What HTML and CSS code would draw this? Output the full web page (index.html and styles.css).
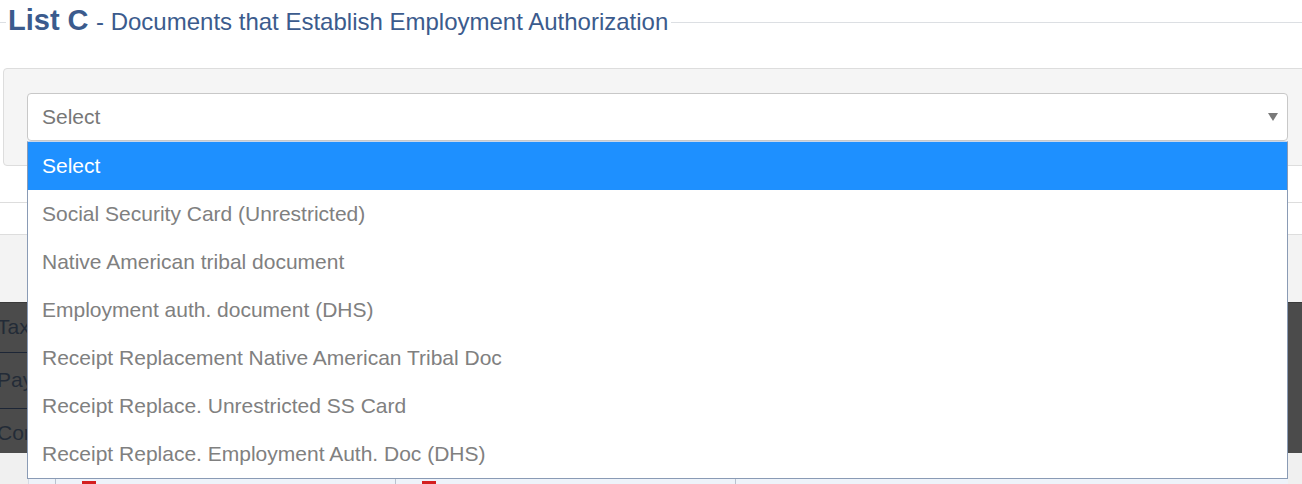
FILE: index.html
```html
<!DOCTYPE html>
<html>
<head>
	<title>I-9 Documents</title>
<link rel="stylesheet" href="styles.css">
</head>
<body>
	<fieldset class="doc-list">
		<legend><span class="list-name">List C</span> <span class="list-desc">- Documents that Establish Employment Authorization</span></legend>
		<div class="well">
			<div class="select-wrap">
				<div class="select-box">
					<span>Select</span>
					<span class="caret"></span>
				</div>
				<ul class="select-menu">
					<li class="active">Select</li>
					<li>Social Security Card (Unrestricted)</li>
					<li>Native American tribal document</li>
					<li>Employment auth. document (DHS)</li>
					<li>Receipt Replacement Native American Tribal Doc</li>
					<li>Receipt Replace. Unrestricted SS Card</li>
					<li>Receipt Replace. Employment Auth. Doc (DHS)</li>
				</ul>
			</div>
		</div>
	</fieldset>

	<div class="page-below">
		<div class="blank-row"></div>
		<div class="tab-row"></div>
		<div class="gray-row"></div>
		<div class="dark-table">
			<div class="dark-cell">Tax</div>
			<div class="dark-cell">Pay</div>
			<div class="dark-cell">Con</div>
		</div>
		<div class="foot">
			<div class="foot-table">
				<div class="foot-cell narrow"></div>
				<div class="foot-cell"><span class="flag"></span></div>
				<div class="foot-cell"><span class="flag"></span></div>
				<div class="foot-cell wide"></div>
			</div>
		</div>
	</div>
</body>
</html>
```

FILE: styles.css
```css
body {
	font-family: "Liberation Sans", Arial, sans-serif;
	margin: 0;
	padding: 0;
	background-color: #ffffff;
	overflow: hidden;
}

.doc-list {
	margin: 3px 0 0 0;
	padding: 0;
	min-width: 0;
	border: none;
	border-top: 1px solid #dcdfe3;
	position: relative;
	z-index: 2;
}

.doc-list legend {
	margin-left: 6px;
	padding: 0 3px 0 2px;
	line-height: 34px;
	color: #3b5b8d;
}

.list-name {
	font-size: 29px;
	font-weight: bold;
}

.list-desc {
	font-size: 24px;
	padding-left: 3px;
}

.well {
	margin: 26px -10px 0 3px;
	padding: 24px 23px;
	background-color: #f5f5f5;
	border: 1px solid #dddddd;
	border-radius: 4px;
}

.select-wrap {
	position: relative;
}

.select-box {
	display: flex;
	align-items: center;
	justify-content: space-between;
	box-sizing: border-box;
	height: 48px;
	padding: 0 9px 0 14px;
	font-size: 21px;
	color: #777777;
	background-color: #ffffff;
	border: 1px solid #c8c8c8;
	border-radius: 4px;
}

.caret {
	width: 0;
	height: 0;
	border-left: 5px solid transparent;
	border-right: 5px solid transparent;
	border-top: 8px solid #7a7a7a;
}

.select-menu {
	list-style: none;
	margin: 0;
	padding: 0;
	position: absolute;
	top: 48px;
	left: 0;
	right: 0;
	background-color: #ffffff;
	border: 1px solid #8a9bb5;
	border-top: 1px solid #c8d6ea;
}

.select-menu li {
	height: 48px;
	line-height: 48px;
	padding-left: 14px;
	font-size: 21px;
	color: #808080;
}

.select-menu li.active {
	background-color: #1e90ff;
	color: #ffffff;
}

.blank-row {
	height: 36px;
}

.tab-row {
	height: 31px;
	border-top: 1px solid #dddddd;
	border-bottom: 1px solid #dddddd;
}

.gray-row {
	height: 67px;
	background-color: #f3f3f3;
}

.dark-table {
	display: flex;
	flex-direction: column;
	background-color: #4b4b4b;
	border-top: 1px solid #3a3a3a;
}

.dark-cell {
	width: 40px;
	height: 50px;
	margin-left: -3px;
	padding-top: 12px;
	box-sizing: border-box;
	font-size: 21px;
	color: #232b37;
	border-bottom: 1px solid #1d2636;
}

.dark-cell:nth-child(2) {
	height: 56px;
	padding-top: 15px;
}

.dark-cell:last-child {
	height: 44px;
	border-bottom: none;
}

.foot {
	height: 40px;
	padding-left: 28px;
	background-color: #f0f0f0;
}

.foot-table {
	display: flex;
	width: 1259px;
	height: 100%;
	background-color: #eef3fa;
	border-left: 1px solid #d5dbe4;
}

.foot-cell {
	box-sizing: border-box;
	width: 340px;
	border-right: 1px solid #b9c2cf;
	padding: 28px 0 0 26px;
}

.foot-cell.narrow {
	width: 27px;
	padding-left: 0;
}

.foot-cell.wide {
	flex-grow: 1;
	border-right: none;
}

.flag {
	display: block;
	width: 14px;
	height: 20px;
	background-color: #d42020;
}
```
